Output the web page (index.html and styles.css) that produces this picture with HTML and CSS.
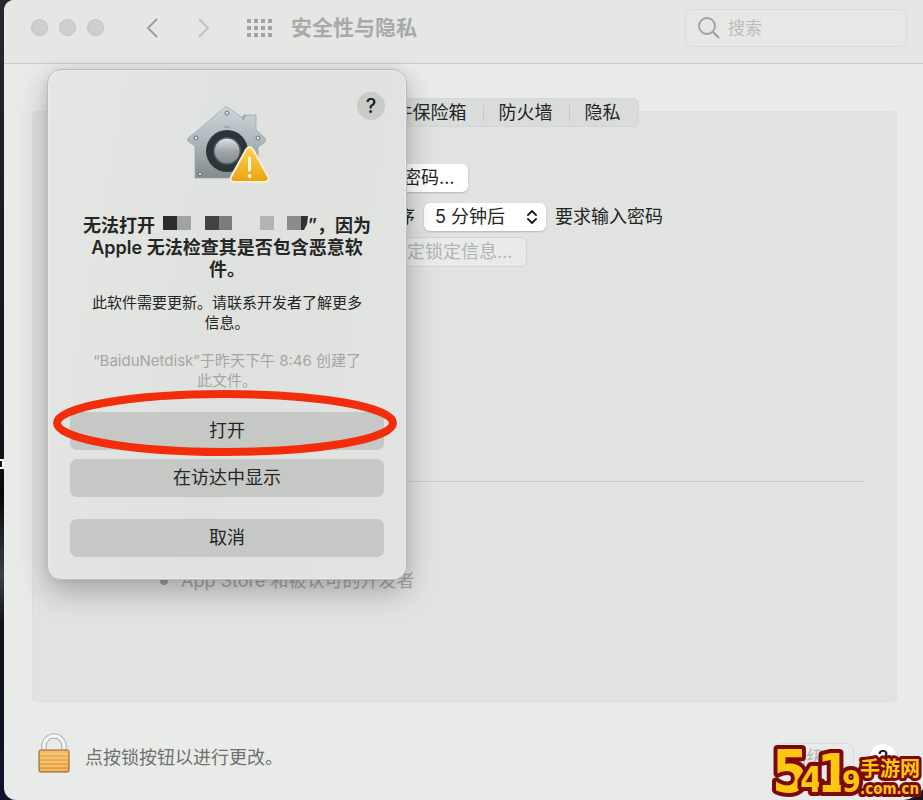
FILE: index.html
```html
<!DOCTYPE html>
<html lang="zh-CN">
<head>
<meta charset="utf-8">
<title>安全性与隐私</title>
<link rel="stylesheet" href="styles.css">
</head>
<body>
<i class="marker"></i>
<div class="window">
  <header class="toolbar">
    <div class="lights"><i></i><i></i><i></i></div>
    <nav class="history">
      <button type="button" aria-label="后退"><svg width="14" height="22" viewBox="0 0 14 22"><path d="M12 2 3 11l9 9"/></svg></button>
      <button type="button" class="off" aria-label="前进"><svg width="14" height="22" viewBox="0 0 14 22"><path d="m2 2 9 9-9 9"/></svg></button>
    </nav>
    <button type="button" class="grid-button" aria-label="全部显示">
      <svg width="26" height="20" viewBox="0 0 26 20"><path d="M3 1v18M10 1v18M17 1v18M24 1v18" stroke="#a2a4a2" stroke-width="4" stroke-dasharray="4 3"/></svg>
    </button>
    <h1>安全性与隐私</h1>
    <label class="search">
      <svg width="24" height="24" viewBox="0 0 24 24"><circle cx="10" cy="10" r="8"/><path d="m16 16 6 6" stroke-width="2.4"/></svg>
      <input type="search" placeholder="搜索" aria-label="搜索">
    </label>
  </header>

  <main>
    <div class="tabs">
      <button type="button">通用</button><button type="button">文件保险箱</button><button type="button">防火墙</button><button type="button">隐私</button>
    </div>
    <section class="panel">
      <div class="rows">
        <div class="row row-password"><button type="button" class="push">更改密码...</button></div>
        <div class="row row-delay">
          <label for="delay">程序</label>
          <span class="popup">
            <select id="delay"><option>5 分钟后</option></select>
            <svg width="12" height="16" viewBox="0 0 12 16"><path d="m2 6 4-4 4 4M2 10l4 4 4-4"/></svg>
          </span>
          <span>要求输入密码</span>
        </div>
        <div class="row row-message"><button type="button" class="push" disabled>设定锁定信息...</button></div>
      </div>
      <hr>
      <label class="source"><input type="radio" checked disabled>App Store 和被认可的开发者</label>
    </section>
  </main>

  <footer>
    <svg class="lock" width="34" height="40" viewBox="0 0 34 40">
      <defs><linearGradient id="gold" x2="0" y2="1"><stop stop-color="#f5c069"/><stop offset="1" stop-color="#e49c38"/></linearGradient></defs>
      <path d="M7 18v-5a10 10 0 0 1 20 0v5" fill="none" stroke="#9b9d9c" stroke-width="5"/>
      <path d="M7 18v-5a10 10 0 0 1 20 0v5" fill="none" stroke="#f4f5f5" stroke-width="3.4"/>
      <rect x="2" y="17" width="30" height="22" rx="1.5" fill="url(#gold)" stroke="#8b6023"/>
      <path d="M3 21h28M3 25h28M3 29h28M3 33h28M3 37h28" stroke="#fbd58c"/>
      <path d="M3 23h28M3 27h28M3 31h28M3 35h28" stroke="#d9983e" opacity=".4"/>
    </svg>
    <span class="lock-text">点按锁按钮以进行更改。</span>
    <button type="button" class="push advanced" disabled>高级...</button>
    <button type="button" class="help white">?</button>
  </footer>

  <div class="dialog" role="alertdialog" aria-labelledby="alert-title">
    <button type="button" class="help">?</button>
    <svg class="app-icon" width="84" height="80" viewBox="0 0 84 80">
      <defs>
        <linearGradient id="house" x2="0" y2="1"><stop stop-color="#ccd6da"/><stop offset=".45" stop-color="#aebabf"/><stop offset="1" stop-color="#858b8c"/></linearGradient>
        <linearGradient id="knob" x2="0" y2="1"><stop stop-color="#dce1e4"/><stop offset=".5" stop-color="#a0a6a9"/><stop offset="1" stop-color="#858b8f"/></linearGradient>
        <linearGradient id="amber" x2="0" y2="1"><stop stop-color="#ffd34d"/><stop offset="1" stop-color="#e9a211"/></linearGradient>
      </defs>
      <path d="M40 1q2-1 4 1l15 11V9h12v15l9 8q2 3-1 5l-6 4v31H10V40l-6-4q-3-2 0-5l7-5z" fill="url(#house)" stroke="#9aa5a9" stroke-width=".7"/>
      <path d="M58 14v-4h3M39 21h6" fill="none" stroke="#849095"/>
      <g fill="#d7dfe2" stroke="#68767b"><circle cx="42" cy="7" r="2"/><circle cx="11" cy="32" r="2"/><circle cx="73" cy="32" r="2"/><circle cx="15" cy="68" r="1.700"/></g>
      <circle cx="42" cy="45" r="21" fill="#2b353a"/><circle cx="42" cy="45" r="14" fill="#44545c"/><circle cx="42" cy="45" r="12.500" fill="url(#knob)"/>
      <path d="M61 43.500q3.500-5 7 0l15 27q2 5-3.500 5.500h-30Q44 76 46 71z" fill="url(#amber)" stroke="#f8f0d9" stroke-width="2"/>
      <path d="M64.500 52v12" stroke="#fffbe9" stroke-width="3" stroke-linecap="round"/><circle cx="64.500" cy="70" r="2" fill="#fffbe9"/>
    </svg>
    <h2 id="alert-title">无法打开<svg class="mosaic" width="145" height="14" viewBox="0 0 145 14"><path d="M0 0h14v14H0z" fill="#2b2d2c"/><path d="M14 0h14v14H14z" fill="#a1a3a2"/><path d="M42 0h14v14H42z" fill="#424443"/><path d="M56 0h13v14H56z" fill="#7b7d7c"/><path d="M97 0h14v14H97z" fill="#b2b4b3"/><path d="M124 0h15v14h-15z" fill="#8b8d8c"/><path d="M138 0h7l-1 8-3 6h-3z" fill="#303231"/></svg>”，因为<br>Apple 无法检查其是否包含恶意软<br>件。</h2>
    <p>此软件需要更新。请联系开发者了解更多<br>信息。</p>
    <p class="faint">“BaiduNetdisk”于昨天下午 8:46 创建了<br>此文件。</p>
    <div class="actions">
      <button type="button">打开</button>
      <button type="button">在访达中显示</button>
      <button type="button" class="cancel">取消</button>
    </div>
    <svg class="ring" width="346" height="68" viewBox="0 0 346 68"><ellipse cx="173" cy="34" rx="168" ry="29"/></svg>
  </div>
</div>

<svg class="watermark" width="156" height="62" viewBox="0 0 156 62">
  <path d="M137 62h19V51q-6 9-19 11" fill="#15151c"/>
  <g class="wm-digits">
    <text x="5" y="54" font-size="58">5</text>
    <text x="33" y="54" font-size="36">4</text>
    <text x="50" y="54" font-size="54">1</text>
    <text x="75" y="54" font-size="30">9</text>
  </g>
  <g class="wm-words">
    <text x="93" y="38" font-size="20">手游网</text>
    <text class="wm-domain" x="93" y="56" font-size="15">.com.cn</text>
  </g>
</svg>
</body>
</html>
```
FILE: styles.css
```css
* { box-sizing: border-box; }

body {
  margin: 0;
  min-height: 100vh;
  padding-left: 4px;
  background: linear-gradient(#272631, #191a22 30%, #121318 58%, #07080b 62%, #3b4149 72%, #101116 78%, #11132b);
  color: #242624;
  font: 18px/24px Inter, "Noto Sans CJK SC", sans-serif;
  position: relative;
  overflow: hidden;
}

button, input, select { font: inherit; color: inherit; }
button { border: 0; padding: 0; background: none; }
svg { display: block; }

.marker {
  position: absolute;
  left: -6px;
  top: 459px;
  width: 10px;
  height: 10px;
  border: 2px solid #fff;
}

.window {
  position: relative;
  min-height: 100vh;
  display: flex;
  flex-direction: column;
  background: #e8ebe8;
  border-radius: 10px 0 0 12px;
  overflow: hidden;
}

.toolbar {
  height: 64px;
  padding: 0 16px 8px 27px;
  display: flex;
  align-items: center;
  background: #e5e7e4;
  border-bottom: 1px solid #c9cbc9;
}

.lights { display: flex; gap: 11px; }
.lights i {
  width: 17px;
  height: 17px;
  border-radius: 50%;
  background: #cdcfcd;
  border: 1px solid #c1c3c1;
}

.history { display: flex; gap: 38px; margin-left: 41px; }
.history svg { fill: none; stroke: #9c9e9c; stroke-width: 2; }
.history .off svg { stroke: #c0c2c0; }
.grid-button { margin-left: 35px; }

h1 {
  margin: 0 0 0 19px;
  font-size: 21px;
  line-height: 28px;
  font-weight: 600;
  color: #a8aaa8;
}

.search {
  display: flex;
  align-items: center;
  gap: 7px;
  width: 222px;
  height: 38px;
  margin-left: auto;
  padding: 0 11px;
  border: 1px solid #d9dbd9;
  border-radius: 7px;
  background: #e6e8e5;
}
.search svg { flex: none; fill: none; stroke: #a0a2a0; stroke-width: 1.8; }
.search input {
  width: 100%;
  min-width: 0;
  padding: 0;
  border: 0;
  outline: 0;
  background: none;
  font-size: 17px;
}
.search input::placeholder { color: #bcbebc; }

main {
  flex: 1;
  display: flex;
  flex-direction: column;
  padding: 34px 26px 0 28px;
}

.tabs {
  position: relative;
  align-self: center;
  display: flex;
  height: 29px;
  margin-bottom: -16px;
  padding: 0 1px;
  border-radius: 6px;
  background: #d9dcda;
  border: 1px solid #d3d6d4;
}
.tabs button { padding: 0 16px; line-height: 27px; position: relative; }
.tabs button + button::before {
  content: "";
  position: absolute;
  left: 0;
  top: 6px;
  height: 16px;
  border-left: 1px solid #c4c7c5;
}

.panel {
  flex: 1;
  padding: 52px 32px 0;
  border: 1px solid #dcdfdd;
  border-radius: 5px;
  background: #e1e3e1;
}
.rows { display: grid; }
.row { display: flex; align-items: center; height: 28px; }
.row-password { padding-left: 289px; margin-bottom: 11px; }
.row-delay { padding-left: 314px; gap: 9px; margin-bottom: 7px; }
.row-message { padding-left: 311px; }

.push {
  height: 28px;
  padding: 0 13px;
  line-height: 26px;
  border-radius: 6px;
  background: #fff;
  box-shadow: 0 1px 2px #0003;
}
.push:disabled { background: #e8ebe9; color: #b1b3b1; box-shadow: 0 0 1px 1px #0001; }

.popup { position: relative; width: 122px; }
.popup select {
  width: 100%;
  height: 28px;
  padding: 0 11px;
  border: 0;
  border-radius: 6px;
  appearance: none;
  background: #fff;
  box-shadow: 0 1px 2px #0003;
}
.popup svg {
  position: absolute;
  right: 8px;
  top: 6px;
  fill: none;
  stroke: #242624;
  stroke-width: 2;
  stroke-linecap: round;
  stroke-linejoin: round;
}

hr { margin: 215px 0 87px; border: 0; border-top: 1px solid #cbcdcb; }
.source { display: flex; align-items: center; gap: 13px; padding-left: 95px; color: #a5a7a5; }
.source input {
  appearance: none;
  width: 8px;
  height: 8px;
  margin: 0;
  border-radius: 50%;
  background: #9c9e9c;
}

footer {
  height: 98px;
  display: flex;
  align-items: center;
  padding: 14px 26px 0 33px;
}
.lock { margin-bottom: 10px; }
.lock-text { margin-left: 14px; color: #6f716f; }
.advanced { margin-left: auto; background: #eff1ef; }

.help {
  width: 28px;
  height: 28px;
  border-radius: 50%;
  background: #c9cbc9;
  color: #161816;
  font-size: 20px;
  font-weight: 500;
  line-height: 28px;
}
.help.white { background: #fff; margin-left: 16px; box-shadow: 0 1px 2px #0003; }

.dialog {
  position: absolute;
  left: 43px;
  top: 69px;
  width: 360px;
  padding: 36px 22px 22px;
  border: 1px solid #b9bbb9;
  border-radius: 14px;
  background: linear-gradient(100deg, #e5e7e4, #dfe1df 50%, #e2e4e2);
  box-shadow: inset 0 0 0 1px #e9ebe9, 0 12px 30px #0004, 0 0 8px #0001;
  text-align: center;
}
.dialog .help { position: absolute; right: 21px; top: 22px; }
.app-icon { display: block; margin: 0 auto 29px; }
h2 { margin: 0 -12px 12px; font-size: 18px; line-height: 22px; font-weight: 600; }
.mosaic { display: inline-block; margin-left: 8px; vertical-align: 2px; }
.dialog p { margin: 0 0 18px; font-size: 15px; line-height: 20px; }
.dialog .faint { margin-bottom: 21px; color: #a4a6a4; }
.actions { display: grid; gap: 9px; }
.actions button { height: 38px; border-radius: 7px; background: #c6c8c6; }
.actions .cancel { margin-top: 13px; }
.ring { position: absolute; left: 4px; top: 319px; pointer-events: none; }
.ring ellipse { fill: none; stroke: #f32c0c; stroke-width: 8; }

.watermark { position: absolute; right: 0; bottom: 0; }
.watermark text {
  fill: #ffc70f;
  stroke: #7d0907;
  paint-order: stroke;
  stroke-linejoin: round;
  font-weight: 700;
}
.watermark .wm-digits text,
.watermark .wm-domain { font-family: "Liberation Sans Narrow", "DejaVu Sans Condensed", sans-serif; }
.wm-digits text { stroke-width: 8; }
.wm-words text { stroke-width: 6; }
```
